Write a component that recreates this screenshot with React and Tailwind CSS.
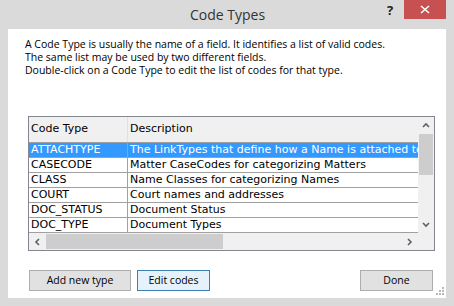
import React from "react";

const rows = [
  ["ATTACHTYPE", "The LinkTypes that define how a Name is attached to a Matter"],
  ["CASECODE", "Matter CaseCodes for categorizing Matters"],
  ["CLASS", "Name Classes for categorizing Names"],
  ["COURT", "Court names and addresses"],
  ["DOC_STATUS", "Document Status"],
  ["DOC_TYPE", "Document Types"],
];

function Chevron({ dir }) {
  const paths = {
    up: "M1 5 L4 2 L7 5",
    down: "M1 2 L4 5 L7 2",
    left: "M5 1 L2 4 L5 7",
    right: "M2 1 L5 4 L2 7",
  };
  return (
    <svg width="8" height="8" viewBox="0 0 8 8">
      <path d={paths[dir]} fill="none" stroke="#606060" strokeWidth="1.6" />
    </svg>
  );
}

function Button({ children, focused, className = "" }) {
  return (
    <button
      className={`h-[21px] text-[10.5px] text-black border ${
        focused ? "border-[#3c7fb1] bg-[#e5f1fb]" : "border-[#adadad] bg-[#e1e1e1]"
      } ${className}`}
    >
      {children}
    </button>
  );
}

export default function App() {
  return (
    <div
      className="w-[454px] h-[306px] bg-[#dadada] flex flex-col overflow-hidden"
      style={{ fontFamily: '"Open Sans", "Liberation Sans", sans-serif' }}
    >
      {/* Title bar */}
      <div className="h-[29px] flex items-start relative shrink-0">
        <div className="flex-1 text-center text-[14px] text-[#333] pt-[4px] pl-[1px]">Code Types</div>
        <span className="absolute left-[387px] top-[1px] text-[13px] font-bold text-[#222]">?</span>
        <div className="absolute left-[404px] top-0 w-[42px] h-[19px] bg-[#c75050] flex items-center justify-center">
          <svg width="10" height="9" viewBox="0 0 10 9">
            <path d="M1 1 L9 8 M9 1 L1 8" stroke="#fff" strokeWidth="1.6" />
          </svg>
        </div>
      </div>

      {/* Client area */}
      <div className="mx-[8px] h-[269px] bg-white flex flex-col relative">
        <div className="pl-[17px] pt-[9px] text-[10.5px] leading-[13px] text-black">
          <p>A Code Type is usually the name of a field. It identifies a list of valid codes.</p>
          <p>The same list may be used by two different fields.</p>
          <p>Double-click on a Code Type to edit the list of codes for that type.</p>
        </div>

        {/* List */}
        <div
          className="ml-[20px] mt-[39px] w-[407px] h-[135px] border border-[#828790] flex flex-col text-[11px]"
          style={{ fontFamily: '"DejaVu Sans", Verdana, sans-serif' }}
        >
          <div className="flex h-[116px]">
            <div className="flex-1 flex flex-col overflow-hidden">
              <div className="h-[26px] flex bg-[#f0f0f0] border-b border-[#a0a0a0]">
                <div className="w-[99px] px-[2px] flex items-center border-r border-[#e0e0e0]">Code Type</div>
                <div className="flex-1 px-[2px] flex items-center">Description</div>
              </div>
              {rows.map(([code, desc], i) => (
                <div
                  key={code}
                  className={`h-[15px] flex leading-[14px] whitespace-nowrap border-b border-[#a0a0a0] ${
                    i === 0 ? "bg-[#3399ff] text-white" : "text-black"
                  }`}
                >
                  <div className="w-[99px] px-[2px] shrink-0 border-r border-[#a0a0a0]">{code}</div>
                  <div className="flex-1 px-[2px] overflow-hidden">{desc}</div>
                </div>
              ))}
            </div>
            {/* Vertical scrollbar */}
            <div className="w-[16px] bg-[#f0f0f0] flex flex-col items-center">
              <div className="h-[17px] flex items-center justify-center">
                <Chevron dir="up" />
              </div>
              <div className="flex-1 w-full flex flex-col">
                <div className="h-[41px] mx-[1px] bg-[#cdcdcd]" />
              </div>
              <div className="h-[17px] flex items-center justify-center">
                <Chevron dir="down" />
              </div>
            </div>
          </div>
          {/* Horizontal scrollbar */}
          <div className="h-[17px] flex bg-[#f0f0f0]">
            <div className="flex-1 flex items-center">
              <div className="w-[17px] flex items-center justify-center">
                <Chevron dir="left" />
              </div>
              <div className="flex-1 h-full flex items-center">
                <div className="w-[177px] h-[15px] bg-[#cdcdcd]" />
              </div>
              <div className="w-[17px] flex items-center justify-center">
                <Chevron dir="right" />
              </div>
            </div>
            <div className="w-[16px]" />
          </div>
        </div>

        {/* Buttons */}
        <div className="flex ml-[21px] mt-[19px] gap-[6px]">
          <Button className="w-[102px]">Add new type</Button>
          <Button className="w-[73px]" focused>
            Edit codes
          </Button>
          <Button className="w-[73px] ml-[144px]">Done</Button>
        </div>

        {/* Resize grip */}
        <svg className="absolute right-[2px] bottom-[3px]" width="8" height="8" viewBox="0 0 8 8">
          {[
            [6, 0],
            [3, 3],
            [6, 3],
            [0, 6],
            [3, 6],
            [6, 6],
          ].map(([x, y]) => (
            <rect key={`${x}-${y}`} x={x} y={y} width="2" height="2" fill="#b8b8b8" />
          ))}
        </svg>
      </div>
    </div>
  );
}
